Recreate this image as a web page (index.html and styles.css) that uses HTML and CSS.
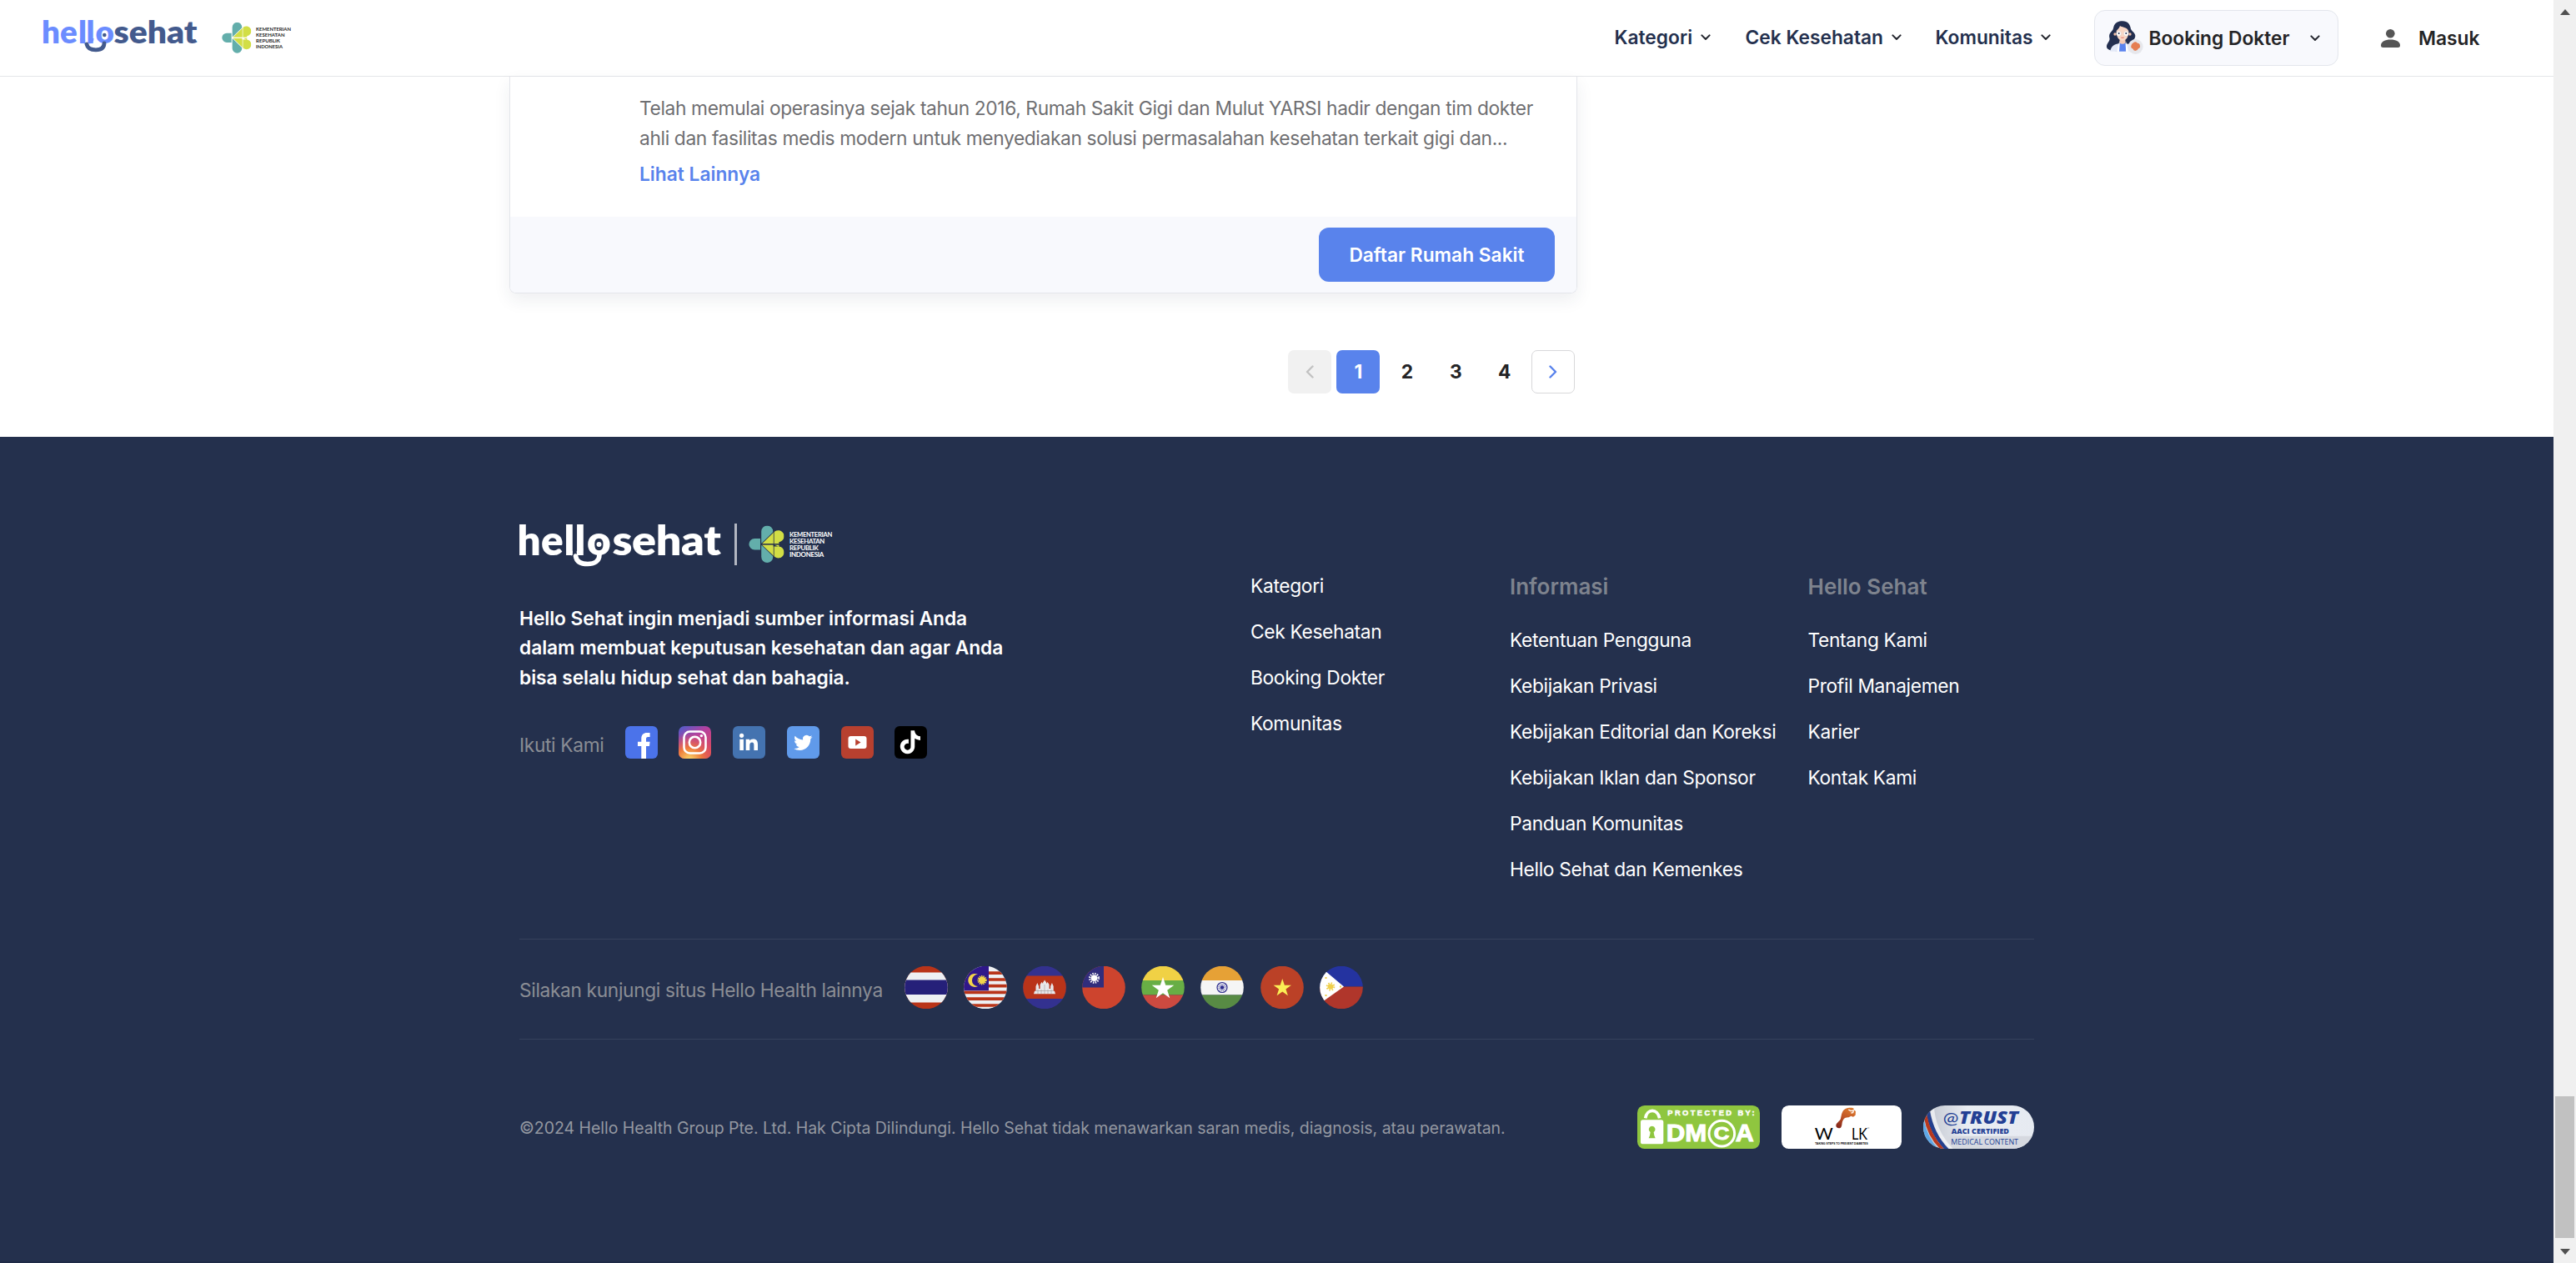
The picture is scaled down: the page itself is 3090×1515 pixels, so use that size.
FILE: index.html
```html
<!DOCTYPE html>
<html lang="id">
<head>
<meta charset="utf-8">
<title>Hello Sehat</title>
<link rel="stylesheet" href="styles.css">
</head>
<body>
<svg class="defs" width="0" height="0" aria-hidden="true">
  <symbol id="kemenkes" viewBox="798 81 106 111">
    <path fill="#63aeab" d="M836 98a17.500 17.500 0 0 1 35 0v2l-34 33h-1zM836 174a17.500 17.500 0 0 0 35 0v-2l-34-33h-1zM833 119h-17a17 17 0 0 0 0 34h17z"/>
    <path fill="#d2de45" d="M838 134.500l36-34.500a17.500 17.500 0 1 1 13 29.500l-13 5zM838 137.500l36 34.500a17.500 17.500 0 1 0 13-29.500l-13-5zM872 129h17v5.500h-17zM872 137.500h17v5h-17z"/>
    <path fill="none" stroke="currentColor" stroke-width="2" d="M873.500 98v76M836 136h66"/>
  </symbol>
  <symbol id="chevron" viewBox="0 0 12 8"><path d="M1.400 1.400 6 6l4.600-4.600" fill="none" stroke="currentColor" stroke-width="2" stroke-linecap="round" stroke-linejoin="round"/></symbol>
  <clipPath id="disc"><circle cx="26" cy="25.500" r="25.800"/></clipPath>
  <symbol id="star" viewBox="-10 -10 20 20"><path d="M0-10 2.300-3.100H9.500L3.700 1.200 5.900 8.100 0 3.800-5.900 8.100-3.700 1.200-9.500-3.100h7.200z"/></symbol>
</svg>

<div class="window">
<div class="page">
  <header class="header">
    <svg class="logo" viewBox="50 8 190 60" width="190" height="60">
      <g class="wordmark" font-size="38.500">
        <text x="50 72 94 103.500 114.500" y="52" fill="#6b8cff">hello</text>
        <text x="136.500" y="52" fill="#435a8d" textLength="100" lengthAdjust="spacingAndGlyphs">sehat</text>
      </g>
      <path d="M98.500 46q0 4 3.500 4.500M107 50.500q3.500-.5 3.500-4.500" fill="none" stroke="#6b8cff" stroke-width="4"/>
      <path d="M104 53c1 5 5 6.800 11 6.800s10-2 10-8" fill="none" stroke="#435a8d" stroke-width="4.800" stroke-linecap="round"/>
      <circle cx="125.300" cy="42" r="2.300" fill="#435a8d"/>
    </svg>
    <svg class="kemenkes on-light" viewBox="266 26 84 39" width="84" height="39">
      <use href="#kemenkes" x="266" y="27" width="35.300" height="37"/>
      <g font-size="6.300">
        <text x="307" y="37.200" textLength="42" lengthAdjust="spacingAndGlyphs">KEMENTERIAN</text><text x="307" y="43.900" textLength="34.500" lengthAdjust="spacingAndGlyphs">KESEHATAN</text>
        <text x="307" y="50.900" textLength="29" lengthAdjust="spacingAndGlyphs">REPUBLIK</text><text x="307" y="57.700" textLength="32" lengthAdjust="spacingAndGlyphs">INDONESIA</text>
      </g>
    </svg>
    <nav class="nav">
      <a class="nav-item">Kategori<svg class="chev"><use href="#chevron"/></svg></a>
      <a class="nav-item">Cek Kesehatan<svg class="chev"><use href="#chevron"/></svg></a>
      <a class="nav-item">Komunitas<svg class="chev"><use href="#chevron"/></svg></a>
    </nav>
    <a class="booking">
      <svg viewBox="108 80 135 123" width="45" height="41">
        <path fill="#232f50" d="M168 81c19 0 27 11 30 28 5 10 16 14 16 25 0 8-4 12-8 16 3 14 12 18 14 28l-60 10c-24 2-48-1-49-14-1-14 14-20 10-33-4-20 12-21 14-35 3-16 13-25 33-25z"/>
        <path fill="#e3e9f8" d="M124 190c2-18 16-27 32-28l12 6 12-6c16 1 28 10 30 28z"/>
        <path fill="#5a83ee" d="M156 160h24v30h-24z"/>
        <path fill="#fff" d="m158 150-5 18-5 22h8l2-24zM179 150l5 18 5 22h-8l-2-24z"/>
        <path fill="#f5c9b3" d="M158 142h20v18q-10 6-20 0z"/>
        <path fill="#f9d8c6" d="M146 116c4-5 10-8 13-18 8 6 24 3 31 19 0 20-7 34-22 34s-22-14-22-35z"/>
        <circle cx="141" cy="128" r="5" fill="#f3bfa6"/><circle cx="195" cy="128" r="5" fill="#f3bfa6"/>
        <g fill="#fff" stroke="#d8c2b8" stroke-width="1.500"><circle cx="155" cy="126" r="9"/><circle cx="181" cy="126" r="9"/></g>
        <g fill="#232f50"><circle cx="155" cy="125" r="3"/><circle cx="181" cy="125" r="3"/></g>
        <path fill="#e0766a" d="M161 139h14q-7 7-14 0z"/>
        <circle cx="215" cy="173" r="27" fill="#e6e7ec"/>
        <path fill="#e57e52" d="M208 158q7-5 14 2 9 1 9 10 2 7-6 10-3 8-11 8-7-1-8-7-9-3-7-11 1-8 9-12z"/>
      </svg>
      <span>Booking Dokter</span>
      <svg class="chev"><use href="#chevron"/></svg>
    </a>
    <a class="login">
      <svg viewBox="0 0 23 22" width="23" height="22"><circle cx="11.300" cy="5.300" r="5.300" fill="#555"/><path fill="#555" d="M0 19.500C0 15 5 12.600 11.500 12.600S23 15 23 19.500c0 1.700-1 2.500-2.600 2.500H2.600C1 22 0 21.200 0 19.500z"/></svg>
      <span>Masuk</span>
    </a>
  </header>

  <main class="main">
    <article class="card">
      <div class="card-body">
        <p class="card-text">Telah memulai operasinya sejak tahun 2016, Rumah Sakit Gigi dan Mulut YARSI hadir dengan tim dokter<br>ahli dan fasilitas medis modern untuk menyediakan solusi permasalahan kesehatan terkait gigi dan...</p>
        <a class="more">Lihat Lainnya</a>
      </div>
      <div class="card-foot"><button class="primary">Daftar Rumah Sakit</button></div>
    </article>
    <div class="pager">
      <span class="pg prev"><svg viewBox="0 0 10 16" width="10" height="16"><path d="M8.500 1.500 2 8l6.500 6.500"/></svg></span>
      <span class="pg on">1</span><span class="pg">2</span><span class="pg">3</span><span class="pg">4</span>
      <span class="pg next"><svg viewBox="0 0 10 16" width="10" height="16"><path d="M1.500 1.500 8 8l-6.500 6.500"/></svg></span>
    </div>
  </main>

  <footer class="footer">
    <section class="top">
      <div class="brand">
        <div class="marks">
          <svg class="foot-logo" viewBox="620 616 246 74" width="246" height="74">
            <g class="wordmark" font-size="49.500" fill="#fff">
              <text x="620.500 649 676.500 689.500 704" y="666">hello</text><text x="734.500" y="666" textLength="130" lengthAdjust="spacingAndGlyphs">sehat</text>
            </g>
            <path d="M682.500 658q0 5 4 6M692 664q5-1 5-6" fill="none" stroke="#fff" stroke-width="5"/>
            <path d="M690.500 667c1 7 7 9.500 14.500 9.500s14-3 14-11" fill="none" stroke="#fff" stroke-width="5.600" stroke-linecap="round"/>
            <circle cx="718.500" cy="653" r="3" fill="#fff"/>
          </svg>
          <i class="bar"></i>
          <svg class="kemenkes on-dark" viewBox="898 630 101 47" width="101" height="47">
            <use href="#kemenkes" x="898" y="630.500" width="42.500" height="45"/>
            <g font-size="7.800">
              <text x="947" y="643.800" textLength="51" lengthAdjust="spacingAndGlyphs">KEMENTERIAN</text><text x="947" y="652" textLength="42" lengthAdjust="spacingAndGlyphs">KESEHATAN</text>
              <text x="947" y="660" textLength="34.500" lengthAdjust="spacingAndGlyphs">REPUBLIK</text><text x="947" y="668" textLength="41" lengthAdjust="spacingAndGlyphs">INDONESIA</text>
            </g>
          </svg>
        </div>
        <p class="mission">Hello Sehat ingin menjadi sumber informasi Anda<br>dalam membuat keputusan kesehatan dan agar Anda<br>bisa selalu hidup sehat dan bahagia.</p>
        <div class="social">
          <span>Ikuti Kami</span>
          <svg viewBox="0 0 39 39"><rect width="39" height="39" rx="6" fill="#4b73ea"/><path fill="#fff" d="M19.300 39V24H15v-5.300h4.300v-3.500C19.300 10.500 22 8 26 8h3.600v5h-2.400c-1.700 0-2.200.9-2.200 2.400v3.300h4.600L29 24h-4v15z"/></svg>
          <svg viewBox="0 0 39 39">
            <defs><linearGradient id="ig1" x1="0" y1="0" x2=".7" y2="1"><stop offset="0" stop-color="#4a5fce"/><stop offset=".45" stop-color="#b5409f"/><stop offset="1" stop-color="#dd4a58"/></linearGradient>
            <radialGradient id="ig2" cx=".33" cy="1.050" r=".85"><stop offset="0" stop-color="#fbdc6a"/><stop offset=".45" stop-color="#ee7b3c"/><stop offset="1" stop-color="#dc4c6a" stop-opacity="0"/></radialGradient></defs>
            <rect width="39" height="39" rx="7" fill="url(#ig1)"/><rect width="39" height="39" rx="7" fill="url(#ig2)"/>
            <g fill="none" stroke="#fff" stroke-width="2.600"><rect x="6.500" y="6.500" width="26" height="26" rx="7"/><circle cx="19.500" cy="19.500" r="6.700"/></g><circle cx="27.400" cy="11.600" r="1.700" fill="#fff"/></svg>
          <svg viewBox="0 0 39 39"><rect width="39" height="39" rx="6" fill="#4473b0"/><path fill="#fff" d="M8.300 15.800h4.600V29H8.300zM15.700 15.800h4.400v1.800c.8-1.300 2.200-2.200 4.300-2.200 4.300 0 5.600 2.600 5.600 6.800V29h-4.600v-6.100c0-2.100-.5-3.500-2.300-3.500-2 0-2.800 1.400-2.800 3.400V29h-4.600z"/><circle cx="10.600" cy="11.300" r="2.600" fill="#fff"/></svg>
          <svg viewBox="0 0 39 39"><rect width="39" height="39" rx="6" fill="#609aea"/><path fill="#fff" transform="translate(8.200 8.700) scale(.93)" d="M23.953 4.570a10 10 0 01-2.825.775 4.958 4.958 0 002.163-2.723c-.951.555-2.005.959-3.127 1.184a4.920 4.920 0 00-8.384 4.482C7.690 8.095 4.067 6.130 1.640 3.162a4.822 4.822 0 00-.666 2.475c0 1.710.87 3.213 2.188 4.096a4.904 4.904 0 01-2.228-.616v.06a4.923 4.923 0 003.946 4.827 4.996 4.996 0 01-2.212.085 4.936 4.936 0 004.604 3.417 9.867 9.867 0 01-6.102 2.105c-.39 0-.779-.023-1.170-.067a13.995 13.995 0 007.557 2.209c9.053 0 13.998-7.496 13.998-13.985 0-.21 0-.42-.015-.63A9.935 9.935 0 0024 4.590z"/></svg>
          <svg viewBox="0 0 39 39"><rect width="39" height="39" rx="6" fill="#b8402f"/><rect x="8.500" y="12" width="22" height="15" rx="3" fill="#fff"/><path fill="#b8402f" d="M17.200 15.600v7.800l6.300-3.900z"/></svg>
          <svg viewBox="0 0 39 39"><rect width="39" height="39" rx="6"/><path fill="#fff" transform="translate(5 5.300) scale(1.160)" d="M12.525.02c1.310-.02 2.610-.01 3.910-.02.08 1.530.63 3.090 1.750 4.170 1.120 1.110 2.700 1.620 4.240 1.790v4.030c-1.440-.05-2.890-.35-4.200-.97-.57-.26-1.100-.59-1.620-.93-.01 2.920.01 5.840-.02 8.750-.08 1.400-.54 2.790-1.350 3.940-1.310 1.920-3.580 3.170-5.910 3.210-1.430.08-2.860-.31-4.080-1.030-2.020-1.190-3.440-3.370-3.650-5.710-.02-.5-.03-1-.01-1.490.18-1.900 1.120-3.720 2.580-4.960 1.660-1.440 3.980-2.130 6.150-1.720.02 1.480-.04 2.960-.04 4.440-.99-.32-2.150-.23-3.020.37-.63.41-1.110 1.040-1.360 1.750-.21.51-.15 1.070-.14 1.610.24 1.640 1.820 3.020 3.500 2.870 1.120-.01 2.190-.66 2.770-1.610.19-.33.4-.67.41-1.060.1-1.790.06-3.570.07-5.360.01-4.030-.01-8.050.02-12.070z"/></svg>
        </div>
      </div>
      <div class="links">
        <ul><li>Kategori</li><li>Cek Kesehatan</li><li>Booking Dokter</li><li>Komunitas</li></ul>
        <div><h3>Informasi</h3><ul><li>Ketentuan Pengguna</li><li>Kebijakan Privasi</li><li>Kebijakan Editorial dan Koreksi</li><li>Kebijakan Iklan dan Sponsor</li><li>Panduan Komunitas</li><li>Hello Sehat dan Kemenkes</li></ul></div>
        <div><h3>Hello Sehat</h3><ul><li>Tentang Kami</li><li>Profil Manajemen</li><li>Karier</li><li>Kontak Kami</li></ul></div>
      </div>
    </section>

    <section class="sites">
      <span>Silakan kunjungi situs Hello Health lainnya</span>
      <div class="flags">
        <svg viewBox="0 0 52 51"><g clip-path="url(#disc)"><path fill="#b93419" d="M0 0h52v51H0z"/><path fill="#eef0f3" d="M0 7.500h52v36H0z"/><path fill="#252079" d="M0 16.500h52V34H0z"/></g></svg>
        <svg viewBox="0 0 52 51"><g clip-path="url(#disc)"><path fill="#eef0f3" d="M0 0h52v51H0z"/><path stroke="#b93419" stroke-width="3.700" d="M0 8.200h52M0 16h52M0 23.700h52M0 31.300h52M0 39.200h52M0 47h52"/><path fill="#30188a" d="M0 0h30v29.300H0z"/><path fill="#f2d44a" d="M17 9.800a8 8 0 1 0 0 14.200 6.800 6.800 0 1 1 0-14.200z"/><circle cx="22" cy="16.700" r="4.700" fill="none" stroke="#f2d44a" stroke-width="2" stroke-dasharray="1.300 1"/><circle cx="22" cy="16.700" r="4.200" fill="#f2d44a"/></g></svg>
        <svg viewBox="0 0 52 51"><g clip-path="url(#disc)"><path fill="#33318f" d="M0 0h52v51H0z"/><path fill="#b93419" d="M0 11.500h52V39H0z"/><path fill="#e8e8ea" d="M13 33.300l1-3.500h1.500V24l1.800-4 1.800 4v3h1.500v-5l2-3 1.500 2v-1.500l2-3 2 3V21l1.500-2 2 3v5h1.500v-3l1.800-4 1.800 4v5.800H38l1 3.500z"/><path stroke="#a9a3a3" stroke-width=".7" d="M15 29.500h22M18 33v-5M22 33v-5M26 33V22M30 33v-5M34 33v-5"/></g></svg>
        <svg viewBox="0 0 52 51"><g clip-path="url(#disc)"><path fill="#cd442e" d="M0 0h52v51H0z"/><path fill="#312d7c" d="M0 0h26v25.500H0z"/><circle cx="14.500" cy="14.300" r="5.300" fill="none" stroke="#fff" stroke-width="2.600" stroke-dasharray="1.400 1.375"/><circle cx="14.500" cy="14.300" r="3.800" fill="#fff"/></g></svg>
        <svg viewBox="0 0 52 51"><g clip-path="url(#disc)"><path fill="#f0d145" d="M0 0h52v17H0z"/><path fill="#68ae45" d="M0 17h52v17.500H0z"/><path fill="#cc4a40" d="M0 34.500h52V51H0z"/></g><use href="#star" x="12" y="13" width="28" height="28" fill="#fff"/></svg>
        <svg viewBox="0 0 52 51"><g clip-path="url(#disc)"><path fill="#e6a136" d="M0 0h52v17H0z"/><path fill="#f5f5f5" d="M0 17h52v17.500H0z"/><path fill="#588b44" d="M0 34.500h52V51H0z"/></g><circle cx="26" cy="25.500" r="6" fill="none" stroke="#2b2a8c" stroke-width="1.200"/><circle cx="26" cy="25.500" r="3.500" fill="none" stroke="#8a8ac0" stroke-width="2.500" stroke-dasharray="1 .83"/><circle cx="26" cy="25.500" r="2.200" fill="#2b2a8c"/></svg>
        <svg viewBox="0 0 52 51"><g clip-path="url(#disc)"><path fill="#bb4127" d="M0 0h52v51H0z"/></g><use href="#star" x="15" y="15" width="22.500" height="22.500" fill="#fbee55"/></svg>
        <svg viewBox="0 0 52 51"><g clip-path="url(#disc)"><path fill="#2433a0" d="M0 0h52v24.500H0z"/><path fill="#b0362b" d="M0 24.500h52V51H0z"/><path fill="#fff" d="M0 0 29 24.500 0 45z"/></g><circle cx="13" cy="24.500" r="4.300" fill="none" stroke="#efcf4b" stroke-width="2" stroke-dasharray="1.600 1.776"/><circle cx="13" cy="24.500" r="3.300" fill="#efcf4b"/><path fill="#efcf4b" d="M6.500 13h2v2h-2zM6.500 34h2v2h-2zM24 23.500h2v2h-2z"/></svg>
      </div>
    </section>

    <section class="legal">
      <span>©2024 Hello Health Group Pte. Ltd. Hak Cipta Dilindungi. Hello Sehat tidak menawarkan saran medis, diagnosis, atau perawatan.</span>
      <div class="badges">
        <svg viewBox="72 75 441 156" width="147" height="52">
          <rect x="72" y="75" width="441" height="156" rx="26" fill="#8fc63f"/>
          <path d="M101 121c6-36 44-36 51 0" fill="none" stroke="#fff" stroke-width="11"/>
          <rect x="84" y="127" width="82" height="87" rx="8" fill="#fff"/>
          <path fill="#8fc63f" d="M125 149a12 12 0 0 1 6 22l2 12 4 10h-24l4-10 2-12a12 12 0 0 1 6-22z"/>
          <g class="heavy" fill="#fff" stroke="#fff" stroke-width="3"><text x="181" y="110" font-size="28" stroke-width="1.500" textLength="313">PROTECTED BY:</text>
          <text x="176" y="205" font-size="86" textLength="146" lengthAdjust="spacingAndGlyphs">DM</text><text x="347" y="199" font-size="66" textLength="56" lengthAdjust="spacingAndGlyphs">C</text><text x="425" y="205" font-size="86" textLength="66" lengthAdjust="spacingAndGlyphs">A</text></g>
          <circle cx="376" cy="176" r="46" fill="none" stroke="#fff" stroke-width="9"/>
        </svg>
        <svg viewBox="591 75 432 156" width="144" height="52">
          <defs><linearGradient id="foot" x1=".7" y1="0" x2=".2" y2="1"><stop offset="0" stop-color="#dd7a2e"/><stop offset=".5" stop-color="#bf5426"/><stop offset="1" stop-color="#84261a"/></linearGradient></defs>
          <rect x="591" y="75" width="432" height="156" rx="26" fill="#fff"/>
          <path fill="url(#foot)" d="M787 146c2-10 14-14 17-24 3-12 4-28 16-34 12-7 27-5 30-3l1 6 7 5-1 14-8 6-8-3-8 5c-8 1-14-1-20 9-6 9-3 23-9 28-8 4-18 0-17-9z"/>
          <path d="m832 90 8 5 10-2-2 8-7 1" fill="none" stroke="#fff" stroke-width="4"/>
          <g class="thin"><text x="710" y="197" font-size="60" textLength="66" lengthAdjust="spacingAndGlyphs">W</text><text x="843" y="197" font-size="60" textLength="57" lengthAdjust="spacingAndGlyphs">LK</text></g>
          <text class="heavy" x="712" y="217" font-size="11" textLength="190" lengthAdjust="spacingAndGlyphs">TAKING STEPS TO PREVENT DIABETES</text>
          <path fill="#777" d="M900 155h7v2h-7z"/>
        </svg>
        <svg viewBox="1101 75 399 156" width="133" height="52">
          <defs><clipPath id="pill"><rect x="1101" y="75" width="399" height="156" rx="78"/></clipPath><linearGradient id="pearl"><stop offset=".1" stop-color="#c9cdd6"/><stop offset=".4" stop-color="#e9edf3"/><stop offset="1" stop-color="#e6eaf1"/></linearGradient></defs>
          <g clip-path="url(#pill)">
            <path fill="url(#pearl)" d="M1101 75h399v156h-399z"/><path fill="#d6d9e0" d="M1160 185h340v46h-320z"/>
            <path fill="#fff" d="M1126 75q4 95 70 156h12q-66-70-68-156z" opacity=".6"/>
            <path fill="#8d929c" d="M1090 130q10 70 55 101h-60z"/>
            <path fill="#24408e" d="M1124 90q14 86 68 141h-17q-54-60-62-126z"/>
            <path fill="#b8381e" d="M1113 105q12 72 62 126h-14q-47-48-57-112z"/>
            <path fill="#5fa8e6" d="M1103 125q12 64 52 106h-16q-36-26-43-82z"/>
          </g>
          <g fill="#233f94"><text x="1172" y="142" font-family="Lato" font-size="58" textLength="56" lengthAdjust="spacingAndGlyphs">@</text>
          <text class="trust" x="1230" y="142" font-size="64" textLength="213" lengthAdjust="spacingAndGlyphs">TRUST</text>
          <text class="aaci" x="1202" y="178" font-size="26" textLength="208" lengthAdjust="spacingAndGlyphs">AACI CERTIFIED</text>
          <text class="medical" x="1201" y="217" font-size="26" textLength="242" lengthAdjust="spacingAndGlyphs">MEDICAL CONTENT</text></g>
        </svg>
      </div>
    </section>
  </footer>
</div>
<aside class="scrollbar"><i class="arrow up"></i><i class="thumb"></i><i class="arrow down"></i></aside>
</div>
</body>
</html>
```
FILE: styles.css
```css
* { box-sizing: border-box; }
body { margin: 0; background: #fff; color: #242426; font: 400 22.75px/35.75px Inter, "Liberation Sans", sans-serif; }
p, ul, h3 { margin: 0; padding: 0; }
ul { list-style: none; }
svg { display: block; flex: none; }
.defs { position: absolute; }
.window { display: flex; height: 1515px; overflow: hidden; }
.page { width: 3063px; flex: none; display: flex; flex-direction: column; }

.header { height: 92px; flex: none; border-bottom: 1px solid #e4e5e9; display: flex; align-items: flex-start; font-weight: 600; padding-left: 50px; background: #fff; }
.logo { margin-top: 8px; }
.wordmark { font-family: Lato, sans-serif; font-weight: 800; }
.kemenkes { font-family: Lato, sans-serif; font-weight: 700; }
.header .kemenkes { margin: 26px 0 0 26px; }
.on-light { fill: #222; color: #fff; }
.on-dark { fill: #fff; color: #24304d; }
.nav { display: grid; grid-template-columns: 157px 228px 190.5px; margin: 27px 0 0 1586.5px; color: #24304e; }
.nav-item { display: flex; align-items: center; gap: 10px; }
.chev { width: 12px; height: 8px; color: #24262e; }
.booking { width: 293px; height: 67px; margin-top: 12px; border: 1px solid #e3e6ec; border-radius: 13px; background: #f8f9fd; display: flex; align-items: center; padding-left: 13px; }
.booking span { margin-left: 6.5px; width: 193.5px; }
.login { display: flex; align-items: center; margin: 28px 0 0 51px; }
.login span { margin-left: 22px; }

.main { height: 432px; flex: none; padding-left: 611px; }
.card { width: 1281px; border: 1px solid #e4e6eb; border-top: 0; border-radius: 0 0 8px 8px; box-shadow: 0 8px 20px rgba(36, 48, 80, .08); }
.card-body { height: 168px; padding: 20px 0 0 155px; }
.card-text { color: #6f6f72; letter-spacing: -.364px; white-space: nowrap; line-height: 35.5px; }
.more { display: block; margin-top: 7.5px; color: #5983ec; font-weight: 600; }
.card-foot { height: 91px; background: #f8f9fd; border-radius: 0 0 7px 7px; display: flex; justify-content: flex-end; padding: 13px 26px 0 0; }
.primary { width: 283px; height: 65px; border: 0; border-radius: 12px; background: #5983ec; color: #fff; font: 600 22.75px Inter, sans-serif; padding: 0; }
.pager { width: 1278px; margin-top: 68px; display: flex; justify-content: flex-end; gap: 6.4px; }
.pg { width: 52px; height: 52px; border-radius: 7px; display: grid; place-items: center; font-weight: 700; line-height: 50px; }
.pg svg { fill: none; stroke: #c2c2c2; stroke-width: 2.4; stroke-linecap: round; stroke-linejoin: round; }
.prev { background: #f1f1f1; }
.on { background: #5983ec; color: #fff; }
.next { border: 1px solid #d8d8da; }
.next svg { stroke: #5983ec; }

.footer { flex: 1; background: #24304d; color: #fff; padding: 0 623px; border-bottom: 2px solid #1f2b47; letter-spacing: -.33px; }
.top { height: 602px; display: flex; }
.brand { width: 877px; padding-top: 102px; }
.marks { display: flex; align-items: center; height: 54px; margin-left: -3px; }
.foot-logo { margin: -10px 0; }
.bar { width: 3px; height: 50px; background: #b3b7c2; margin: 0 14px 0 15px; }
.mission { margin-top: 43.85px; font-weight: 600; line-height: 35.6px; letter-spacing: -.05px; }
.social { display: flex; align-items: center; margin-top: 38.5px; color: #8a8d94; }
.social span { width: 126.5px; padding-top: 7px; letter-spacing: -.35px; }
.social svg { width: 39px; height: 39px; margin-right: 25.8px; }
.links { display: grid; grid-template-columns: 311px 357.5px auto; padding-top: 160px; white-space: nowrap; }
.links li { height: 35.75px; margin-bottom: 19.4px; }
.links > ul { padding-top: 1px; }
.links h3 { font-size: 26px; line-height: 39px; font-weight: 600; letter-spacing: 0; color: #7e838e; margin-bottom: 26.5px; }
.sites { height: 121px; border: solid #36415c; border-width: 1px 0; display: flex; align-items: center; color: #8a8d94; }
.sites span { width: 462px; padding-top: 2px; letter-spacing: -.36px; }
.flags { display: flex; gap: 19.1px; margin-bottom: 5px; }
.flags svg { width: 52px; height: 51px; }
.legal { display: flex; justify-content: space-between; align-items: center; margin-top: 78.5px; font-size: 19.5px; color: #9498a1; letter-spacing: -.03px; }
.legal > span { padding-top: 5px; }
.badges { display: flex; gap: 26px; }
.heavy { font-family: "Liberation Sans", sans-serif; font-weight: 700; }
.thin { font-family: Lato, sans-serif; font-weight: 400; }
.trust { font-family: "Open Sans", sans-serif; font-weight: 800; font-style: italic; }
.aaci { font-family: "Open Sans", sans-serif; font-weight: 800; }
.medical { font-family: "Open Sans", sans-serif; font-weight: 400; }

.scrollbar { width: 27px; background: #f0f0f0; display: flex; flex-direction: column; align-items: center; justify-content: space-between; padding: 11px 0 10px; }
.arrow { border: 6.5px solid transparent; width: 0; height: 0; }
.up { border-top: 0; border-bottom: 7px solid #505050; }
.down { border-bottom: 0; border-top: 7px solid #505050; }
.thumb { width: 23px; height: 170px; background: #c1c1c1; margin: auto 0 13px; }
```
